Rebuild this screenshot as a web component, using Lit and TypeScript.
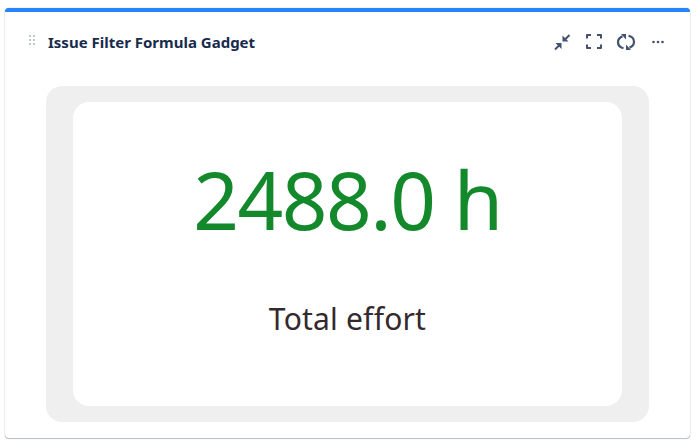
import { LitElement, html, css } from 'lit';
import { customElement } from 'lit/decorators.js';

@customElement('app-root')
export class AppRoot extends LitElement {
    static styles = css`
        :host {
            display: block;
            width: 696px;
            height: 443px;
            background: #fff;
            font-family: "Noto Sans", "DejaVu Sans", sans-serif;
            padding: 8px 6px 5px 5px;
            box-sizing: border-box;
        }

        .gadget {
            height: 430px;
            box-sizing: border-box;
            display: flex;
            flex-direction: column;
            border-radius: 4px;
            border-top: 4px solid #2684ff;
            box-shadow: 0 0 1px rgba(9, 30, 66, 0.55), 0 1px 1px rgba(9, 30, 66, 0.25);
            background: #fff;
        }

        .header {
            height: 74px;
            flex: none;
            box-sizing: border-box;
            display: flex;
            align-items: flex-start;
            padding: 20px 22px 0 23px;
        }

        .grip {
            width: 8px;
            height: 10px;
            margin-top: 3px;
            flex: none;
        }

        .title {
            margin-left: 12px;
            font-size: 15px;
            line-height: 20px;
            font-weight: 700;
            color: #172b4d;
            flex: 1;
        }

        .actions {
            display: flex;
            gap: 12px;
        }

        .actions svg {
            width: 20px;
            height: 20px;
            display: block;
            color: #42526e;
        }

        .outer {
            flex: none;
            height: 336px;
            margin: 0 41px;
            box-sizing: border-box;
            padding: 16px 27px;
            background: #efefef;
            border-radius: 16px;
        }

        .inner {
            height: 304px;
            background: #fff;
            border-radius: 16px;
            display: flex;
            flex-direction: column;
            align-items: center;
        }

        .value {
            margin-top: 49px;
            font-size: 80px;
            line-height: 96px;
            letter-spacing: -1.5px;
            color: #14892c;
        }

        .label {
            margin-top: 52px;
            font-size: 30px;
            line-height: 40px;
            letter-spacing: 0.2px;
            color: #33292e;
        }
    `;

    render() {
        return html`
            <div class="gadget">
                <div class="header">
                    <svg class="grip" viewBox="0 0 8 10" fill="#c1c7d0">
                        <rect x="1" y="0" width="2" height="2"></rect><rect x="5" y="0" width="2" height="2"></rect>
                        <rect x="1" y="4" width="2" height="2"></rect><rect x="5" y="4" width="2" height="2"></rect>
                        <rect x="1" y="8" width="2" height="2"></rect><rect x="5" y="8" width="2" height="2"></rect>
                    </svg>
                    <div class="title">Issue Filter Formula Gadget</div>
                    <div class="actions">
                        <svg viewBox="0 0 20 20" fill="currentColor">
                            <path d="M3 17.5 8 12.5" fill="none" stroke="currentColor" stroke-width="2" />
                            <path d="M3.5 11H9.5V17Z" />
                            <path d="M17.5 3 12.5 8" fill="none" stroke="currentColor" stroke-width="2" />
                            <path d="M10.5 3.5V9.5H16.5Z" />
                        </svg>
                        <svg viewBox="0 0 20 20" fill="none" stroke="currentColor" stroke-width="2" stroke-linejoin="round">
                            <path d="M7 3H3V6.5M13 3H17V6.5M3 12.5V16H7M17 12.5V16H13" />
                        </svg>
                        <svg viewBox="0 0 20 20" fill="none" stroke="currentColor" stroke-width="2.2">
                            <path d="M7.5 16.2C4 15.4 2 13 2 10C2 7.4 3.4 5.6 6.5 4.4" />
                            <path d="M12.5 3.8C16 4.6 18 7 18 10C18 12.6 16.6 14.4 13.5 15.6" />
                            <path d="M5 2H10V7.5Z" fill="currentColor" stroke="none" />
                            <path d="M15 18H10V12.5Z" fill="currentColor" stroke="none" />
                        </svg>
                        <svg viewBox="0 0 20 20" fill="currentColor">
                            <circle cx="5.5" cy="10" r="1.3"></circle><circle cx="10" cy="10" r="1.3"></circle><circle cx="14.5" cy="10" r="1.3"></circle>
                        </svg>
                    </div>
                </div>
                <div class="outer">
                    <div class="inner">
                        <div class="value">2488.0 h</div>
                        <div class="label">Total effort</div>
                    </div>
                </div>
            </div>
        `;
    }
}
